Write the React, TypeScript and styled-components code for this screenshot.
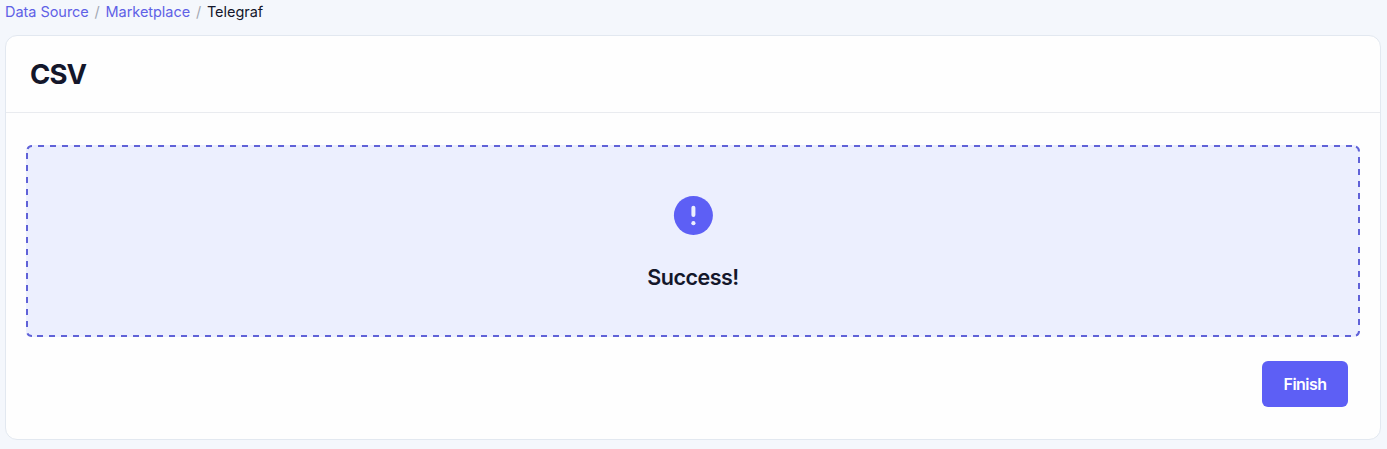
import React from "react";
import styled, { createGlobalStyle } from "styled-components";

const GlobalStyle = createGlobalStyle`
  * { box-sizing: border-box; }
  body {
    margin: 0;
    background: #f4f7fc;
    color: #14172b;
    font-family: Inter, "Liberation Sans", sans-serif;
  }
`;

const Page = styled.main`
  height: 449px;
  padding: 0 6px 9px 5px;
  display: flex;
  flex-direction: column;
`;

const Breadcrumb = styled.nav`
  height: 35px;
  display: flex;
  align-items: flex-start;
  gap: 5.8px;
  font-size: 14.5px;
  line-height: 24px;
  letter-spacing: -0.04px;
`;

const Crumb = styled.span<{ $link?: boolean }>`
  color: ${(p) => (p.$link ? "#5f61e6" : "#14172b")};
`;

const Slash = styled.span`
  color: #a3a8b3;
`;

const Card = styled.section`
  flex: 1;
  display: flex;
  flex-direction: column;
  background: #fefefe;
  border: 1px solid #e2e8f0;
  border-radius: 12px;
`;

const CardHeader = styled.header`
  height: 77px;
  padding: 0 24px;
  display: flex;
  align-items: center;
  border-bottom: 1px solid #e9ebef;
`;

const Title = styled.h1`
  margin: 0;
  font-size: 27.5px;
  font-weight: 650;
  line-height: 36px;
  letter-spacing: -0.9px;
`;

const CardBody = styled.div`
  padding: 32px 20px 0;
`;

const StatusPanel = styled.div`
  position: relative;
  height: 192px;
  display: flex;
  flex-direction: column;
  align-items: center;
  padding-top: 50px;
  border-radius: 6px;
  background: #eceffe;
`;

const DashedOutline = styled.svg`
  position: absolute;
  inset: 0;
  width: 100%;
  height: 100%;
  fill: none;
  stroke: #6062d8;
  stroke-width: 2;
`;

const Message = styled.h2`
  margin: 26px 0 0;
  font-size: 21.5px;
  font-weight: 620;
  line-height: 32px;
  letter-spacing: -0.52px;
`;

const Actions = styled.div`
  display: flex;
  justify-content: flex-end;
  padding: 24px 12px 0;
`;

const Button = styled.button`
  width: 86px;
  height: 46px;
  padding: 0;
  border: 0;
  border-radius: 6px;
  background: #5d5ff5;
  color: #fff;
  font: 600 16px/24px Inter, "Liberation Sans", sans-serif;
  letter-spacing: -0.55px;
`;

const AlertIcon = () => (
  <svg width="40" height="40" viewBox="0 0 40 40">
    <circle cx="20.4" cy="20.4" r="19.5" fill="#5d5ff5" />
    <path d="M20.4 12.7v7.4" stroke="#eceffe" strokeWidth="4" strokeLinecap="round" />
    <circle cx="20.4" cy="28.2" r="2.1" fill="#eceffe" />
  </svg>
);

export default function App() {
  return (
    <Page>
      <GlobalStyle />
      <Breadcrumb>
        <Crumb $link>Data Source</Crumb>
        <Slash>/</Slash>
        <Crumb $link>Marketplace</Crumb>
        <Slash>/</Slash>
        <Crumb>Telegraf</Crumb>
      </Breadcrumb>
      <Card>
        <CardHeader>
          <Title>CSV</Title>
        </CardHeader>
        <CardBody>
          <StatusPanel>
            <DashedOutline viewBox="0 0 1334 192">
              <g strokeDasharray="6 6">
                <path d="M12 1H1326" />
                <path d="M11 191H1325" />
                <path d="M1 8V182" />
                <path d="M1333 12V91" />
                <path d="M1333 102V181" />
              </g>
              <path d="M1.6 4Q2.6 1 6 1M1330 1.6Q1333 2.8 1333 6.5M1333 186Q1333 189.6 1330 190.6M1.4 188.4Q2.6 191 6 191" />
            </DashedOutline>
            <AlertIcon />
            <Message>Success!</Message>
          </StatusPanel>
          <Actions>
            <Button>Finish</Button>
          </Actions>
        </CardBody>
      </Card>
    </Page>
  );
}
